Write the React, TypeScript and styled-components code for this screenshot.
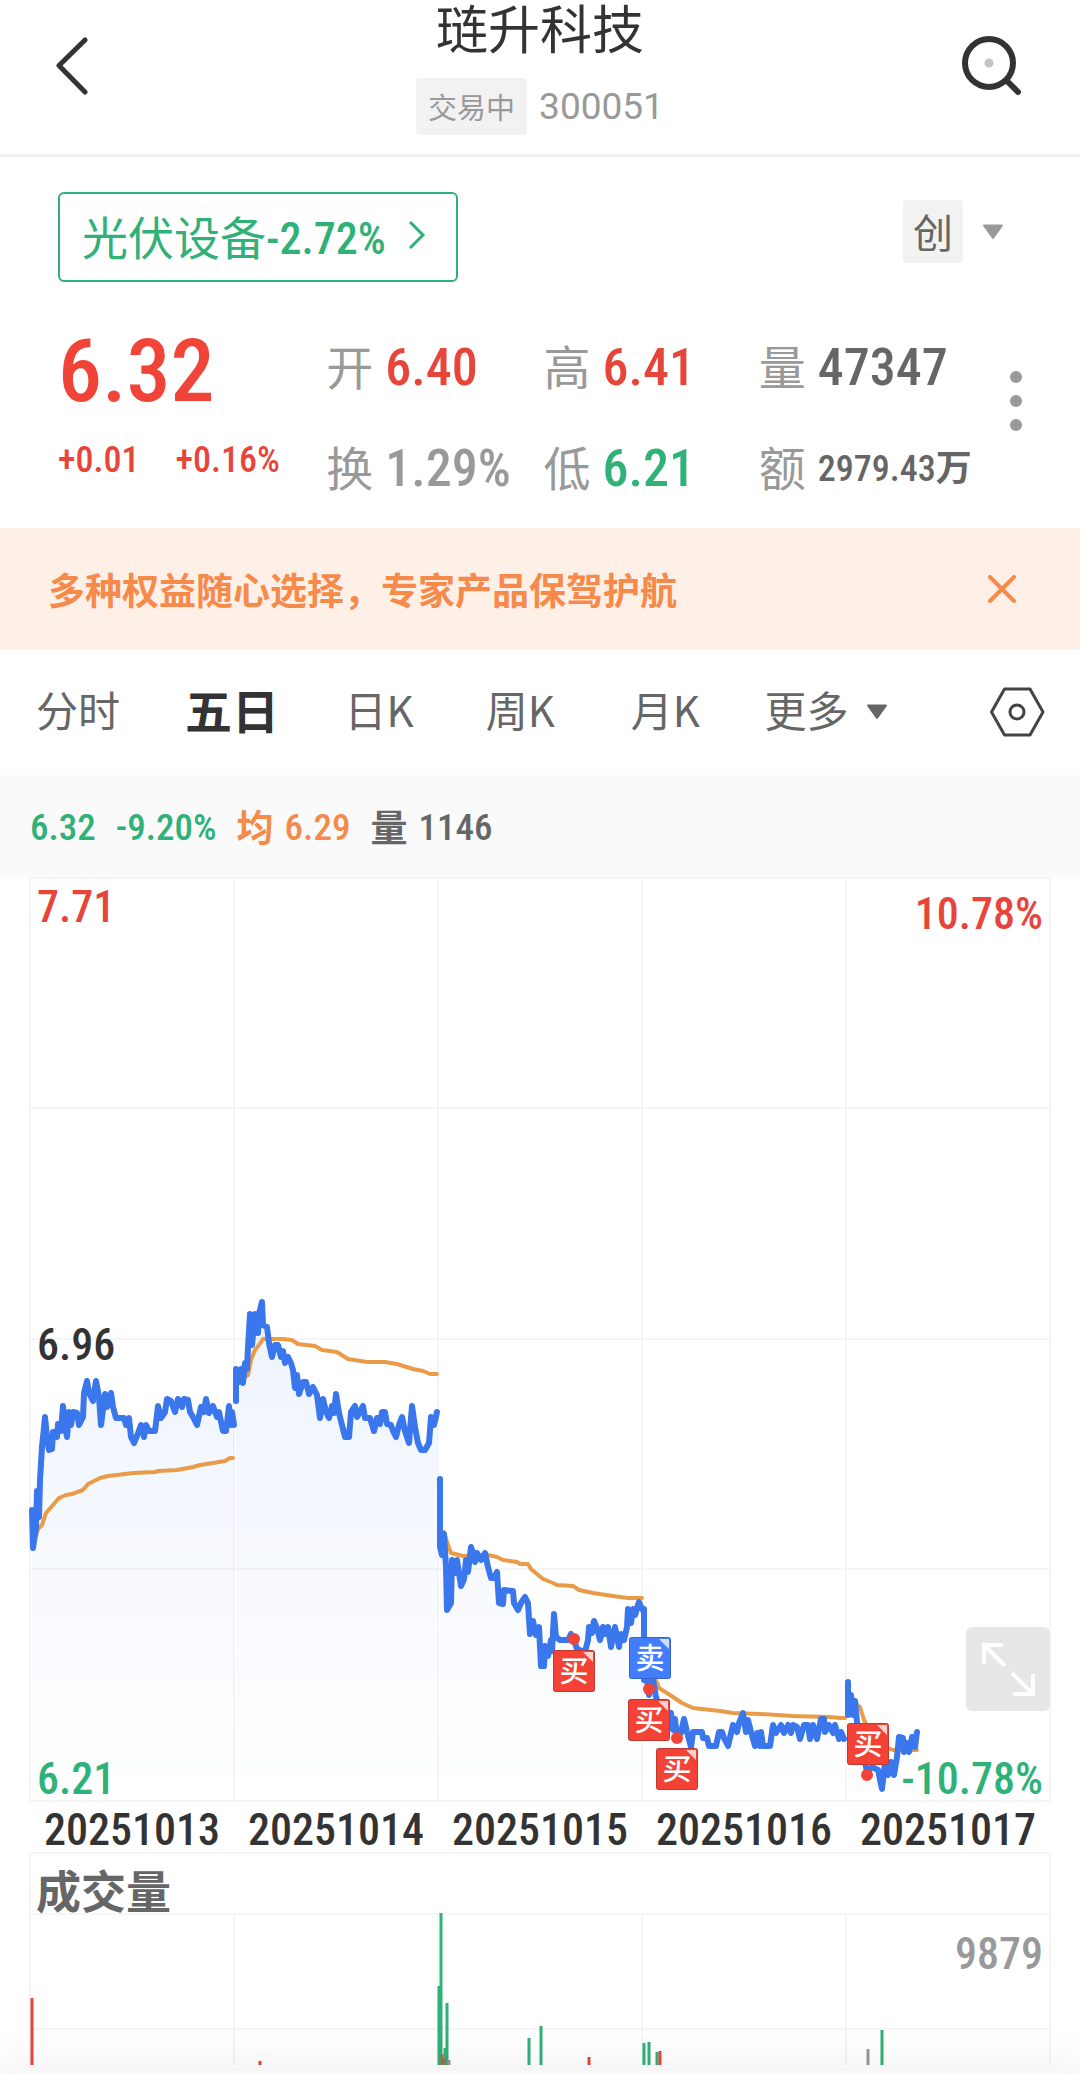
import React from 'react';
import styled, { createGlobalStyle } from 'styled-components';

const red = '#e8453a';
const green = '#2fb178';
const orange = '#f58a4b';
const ink = '#333333';
const mid = '#666666';
const soft = '#999999';
const line = '#f5f5f5';

const cjk = "'Noto Sans CJK SC', sans-serif";
const digits = `'Roboto Condensed', Roboto, ${cjk}`;

const GlobalStyle = createGlobalStyle`
  * { box-sizing: border-box; }
  body { margin: 0; background: #fff; color: ${ink}; font-family: Roboto, ${cjk}; overflow-x: hidden; }
  h1, p { margin: 0; font-weight: 400; }
  button { border: 0; padding: 0; background: none; color: inherit; font: inherit; cursor: pointer; }
  svg { display: block; }
`;

const Page = styled.main`
  overflow: hidden;
`;

const Header = styled.header`
  display: grid;
  grid-template-columns: 1fr auto 1fr;
  align-items: start;
  padding: 0 56px 19px;
  border-bottom: 3px solid #f2f2f2;
`;

const HeaderButton = styled.button<{ $end?: boolean }>`
  justify-self: ${(p) => (p.$end ? 'end' : 'start')};
  margin-top: 32px;
`;

const TitleBlock = styled.div`
  display: flex;
  flex-direction: column;
  align-items: center;
  gap: 24px;
`;

const Title = styled.h1`
  font: 400 52px/54px ${cjk};
`;

const CodeRow = styled.div`
  display: flex;
  align-items: center;
  gap: 12px;
  color: ${soft};
  font-size: 37px;
`;

const StatusBadge = styled.span`
  padding: 0 12px;
  border-radius: 4px;
  background: #f2f2f2;
  font: 400 29px/57px ${cjk};
`;

const Quote = styled.section`
  padding: 35px 58px 29px;
`;

const SectorRow = styled.div`
  display: flex;
  justify-content: space-between;
  align-items: flex-start;
`;

const SectorButton = styled.button`
  display: flex;
  align-items: center;
  height: 90px;
  padding: 0 30px 4px 22px;
  border: 2px solid ${green};
  border-radius: 6px;
  color: ${green};
  font: 400 46px/46px ${cjk};
`;

const SectorChange = styled.span`
  margin-right: 22px;
  font: 500 44px/46px ${digits};
  padding-top: 8px;
`;

const BoardButton = styled.button`
  display: flex;
  align-items: center;
  gap: 19px;
  margin: 8px 18px 0 0;
`;

const BoardBadge = styled.span`
  padding: 0 10px;
  border-radius: 4px;
  background: #f2f2f2;
  color: ${mid};
  font: 400 40px/63px ${cjk};
`;

const Stats = styled.div`
  display: grid;
  grid-template-columns: minmax(0, 268fr) minmax(0, 217fr) minmax(0, 215fr) minmax(0, 251fr) auto;
  margin-top: 43px;
`;

const PriceColumn = styled.div`
  display: flex;
  flex-direction: column;
  gap: 23px;
  color: ${red};
`;

const Price = styled.strong`
  color: #f04438;
  font: 500 88px/92px ${digits};
`;

const Changes = styled.p`
  display: flex;
  gap: 36px;
  font: 500 36px/40px ${digits};
`;

const StatColumn = styled.div`
  display: flex;
  flex-direction: column;
  gap: 41px;
  padding-top: 13px;
`;

const Stat = styled.p`
  display: flex;
  align-items: center;
  gap: 12px;
  height: 60px;
  white-space: nowrap;
`;

const StatLabel = styled.span`
  padding-bottom: 6px;
  color: ${soft};
  font: 400 47px/54px ${cjk};
`;

const StatValue = styled.span<{ $color: string; $small?: boolean }>`
  color: ${(p) => p.$color};
  font: 500 ${(p) => (p.$small ? 36 : 52)}px/60px ${digits};
`;

const Unit = styled.span`
  font: 700 36px/36px ${cjk};
`;

const MoreButton = styled.button`
  align-self: start;
  margin-top: 46px;
`;

const Banner = styled.aside`
  display: flex;
  align-items: center;
  justify-content: space-between;
  height: 121px;
  padding: 0 64px 0 48px;
  background: #fff0e7;
  color: ${orange};
  font: 700 37px/46px ${cjk};
`;

const Tabs = styled.nav`
  display: grid;
  grid-template-columns: 158fr 154fr 144fr 142fr 152fr 136fr 194fr;
  align-items: center;
  height: 126px;
`;

const Tab = styled.button<{ $active?: boolean }>`
  display: flex;
  align-items: center;
  justify-content: center;
  padding-bottom: 6px;
  color: ${(p) => (p.$active ? ink : mid)};
  font: ${(p) => (p.$active ? '700 47px' : '400 42px')}/54px ${cjk};
  white-space: nowrap;
`;

const MoreTab = styled(Tab)`
  justify-content: flex-start;
  gap: 18px;
  padding-left: 24px;
  & > svg { margin-top: 6px; }
`;

const SettingsButton = styled.button`
  justify-self: end;
  margin-right: 35px;
`;

const InfoBar = styled.div`
  display: flex;
  align-items: center;
  gap: 20px;
  height: 102px;
  padding: 4px 30px 0;
  background: #fafafa;
`;

const Info = styled.span<{ $color: string }>`
  display: flex;
  align-items: center;
  gap: 11px;
  color: ${(p) => p.$color};
  font: 500 37px/46px ${digits};
`;

const InfoLabel = styled.span`
  padding-bottom: 4px;
  font: 700 37px/46px ${cjk};
`;

const Panel = styled.section`
  position: relative;
  margin: 1px 30px 0;
  & > svg { width: 100%; height: auto; overflow: visible; }
`;

const AxisLabel = styled.span<{ $color: string; $right?: boolean; $top?: string }>`
  position: absolute;
  ${(p) => (p.$right ? 'right' : 'left')}: 7px;
  ${(p) => (p.$top ? `top: ${p.$top}` : 'bottom: 0')};
  color: ${(p) => p.$color};
  font: 500 44px/44px ${digits};
`;

const VolumeTitle = styled.h2`
  position: absolute;
  top: 14px;
  left: 6px;
  margin: 0;
  color: ${mid};
  font: 700 45px/46px ${cjk};
`;

const ExpandButton = styled.button`
  position: absolute;
  right: 0;
  bottom: 90px;
  border-radius: 6px;
  background: #e7e7e7;
`;

const Dates = styled.div`
  display: grid;
  grid-template-columns: repeat(5, 1fr);
  margin: 0 30px;
  text-align: center;
  font: 500 44px/44px ${digits};
  padding: 7px 0 0;
`;

const Sheet = styled.footer`
  position: relative;
  height: 4px;
  margin: 6px 20px 0;
  border-radius: 24px 24px 0 0;
  background: #fafafa;
  box-shadow: 0 30px 56px 30px rgba(0, 0, 0, 0.08);
`;

const MarkerText = styled.text`
  fill: #fff;
  font: 500 29px ${cjk};
  text-anchor: middle;
`;

const priceDays = [
  '32,1510 33,1548 36,1527 37,1491 39,1517 40,1480 42,1447 45,1417 47,1437 49,1450 52,1449 53,1432 57,1437 58,1424 61,1431 63,1406 65,1427 67,1437 69,1412 71,1425 73,1412 77,1413 79,1425 83,1417 84,1393 87,1381 89,1393 93,1401 96,1381 99,1397 101,1425 105,1394 107,1407 111,1393 113,1407 116,1418 124,1418 126,1425 129,1418 131,1437 134,1443 137,1436 141,1425 144,1437 146,1425 149,1431 155,1431 158,1406 161,1418 165,1412 167,1399 171,1401 175,1412 178,1399 182,1407 184,1399 188,1400 190,1412 193,1417 197,1425 201,1407 204,1412 206,1399 209,1413 213,1406 217,1417 219,1412 223,1431 226,1431 229,1406 231,1425 232,1412 234,1425',
  '236,1401 236,1369 239,1382 241,1369 243,1383 245,1363 247,1369 248,1347 250,1314 252,1345 255,1314 258,1333 259,1314 262,1302 263,1325 267,1327 269,1343 272,1357 275,1345 278,1345 281,1357 283,1351 285,1363 288,1357 291,1363 293,1370 295,1388 297,1375 299,1394 303,1382 306,1382 309,1394 313,1387 317,1395 320,1418 323,1399 326,1412 329,1418 332,1406 334,1413 336,1394 339,1413 342,1425 345,1437 349,1437 351,1412 355,1406 357,1417 363,1406 365,1418 370,1418 374,1431 377,1418 380,1424 382,1412 385,1412 387,1424 391,1425 393,1431 396,1437 399,1425 402,1417 405,1431 409,1443 412,1406 415,1427 418,1443 421,1450 425,1450 429,1443 431,1417 434,1425 437,1412',
  '440,1479 440,1547 442,1555 444,1534 446,1567 447,1610 451,1603 452,1560 455,1573 457,1560 461,1586 464,1579 466,1560 468,1572 471,1547 473,1553 475,1562 477,1553 481,1560 485,1553 488,1567 491,1578 494,1578 497,1572 499,1603 503,1604 504,1590 513,1591 514,1603 518,1610 521,1603 525,1597 528,1603 530,1634 533,1621 536,1635 539,1627 541,1666 544,1666 545,1646 548,1656 551,1640 552,1651 554,1614 556,1637 560,1640 568,1640 571,1634 574,1640 577,1649 585,1652 588,1640 589,1627 592,1633 594,1621 597,1628 600,1640 603,1627 605,1634 608,1627 611,1647 615,1627 619,1647 621,1634 624,1640 627,1627 628,1609 631,1623 633,1609 635,1615 639,1602 642,1609',
  '644,1609 644,1680 647,1680 649,1695 651,1682 653,1680 656,1697 660,1710 667,1717 671,1713 673,1730 675,1719 677,1737 681,1733 684,1719 687,1732 691,1747 693,1732 702,1732 703,1738 707,1738 709,1746 716,1746 719,1732 722,1732 724,1738 728,1746 733,1725 737,1732 739,1723 743,1713 746,1732 748,1720 751,1732 755,1746 757,1733 760,1746 761,1732 763,1746 770,1746 773,1725 776,1733 781,1725 784,1733 788,1725 791,1733 793,1725 797,1727 800,1739 804,1725 808,1725 810,1739 813,1725 817,1739 821,1719 824,1719 825,1732 829,1725 833,1733 835,1725 839,1739 841,1732 844,1739',
  '848,1682 848,1715 851,1695 853,1715 855,1701 857,1722 862,1747 867,1772 872,1767 878,1770 882,1789 885,1762 888,1775 891,1762 894,1775 897,1757 899,1737 903,1738 904,1752 907,1743 909,1752 912,1737 915,1747 917,1732',
];

const averageDays = [
  '36,1536 38,1529 42,1525 46,1513 53,1505 59,1498 66,1495 72,1494 83,1490 88,1484 100,1478 108,1476 125,1474 133,1473 155,1472 158,1471 177,1470 193,1467 200,1465 213,1463 225,1461 230,1458 233,1458',
  '245,1377 248,1375 251,1360 255,1350 259,1345 263,1339 283,1339 292,1340 298,1344 315,1346 322,1350 337,1352 348,1359 367,1362 385,1362 397,1364 413,1369 423,1371 430,1374 437,1374',
  '444,1532 448,1545 451,1553 463,1556 488,1555 497,1557 503,1560 517,1562 520,1564 528,1564 531,1569 543,1579 553,1583 557,1585 573,1586 579,1590 593,1593 613,1596 628,1598 642,1598',
  '653,1670 656,1680 659,1688 670,1695 682,1703 693,1708 720,1711 733,1713 760,1714 793,1716 830,1717 840,1718 845,1718',
  '855,1703 860,1707 864,1720 874,1738 888,1748 893,1750 917,1750',
];

const trades = [
  { x: 553, y: 1650, sign: '买', dot: [574, 1639] },
  { x: 656, y: 1748, sign: '买', dot: [677, 1738] },
  { x: 628, y: 1699, sign: '买', dot: [649, 1689] },
  { x: 629, y: 1637, sign: '卖' },
  { x: 847, y: 1723, sign: '买', dot: [867, 1775] },
];

const volumes: [number, number, string][] = [
  [32, 1997, red], [260, 2060, red], [439, 1985, green], [441, 1912, green], [447, 2002, green],
  [445, 2047, green], [442, 2053, '#a0704f'], [444, 2057, '#a0704f'], [449, 2059, soft], [529, 2037, green],
  [541, 2025, green], [589, 2056, red], [644, 2042, green], [649, 2041, green], [657, 2051, green],
  [660, 2050, red], [868, 2048, soft], [882, 2029, green],
];

const days = ['20251013', '20251014', '20251015', '20251016', '20251017'];
const columns = [30, 234, 438, 642, 846, 1050];

const areaOf = (points: string) => {
  const list = points.split(' ');
  const first = list[0].split(',')[0];
  const last = list[list.length - 1].split(',')[0];
  return `${first},1801 ${points} ${last},1801`;
};

function Triangle({ color }: { color: string }) {
  return (
    <svg width="22" height="16" viewBox="0 0 22 16" aria-hidden="true">
      <path d="M2 1.5H20L11 14Z" fill={color} stroke={color} strokeWidth="2" strokeLinejoin="round" />
    </svg>
  );
}

function PriceChart() {
  return (
    <svg viewBox="30 878 1020 923" role="img" aria-label="五日">
      <defs>
        <linearGradient id="area" gradientUnits="userSpaceOnUse" x1="0" y1="1300" x2="0" y2="1801">
          <stop offset="0" stopColor="#3c78f0" stopOpacity="0.09" />
          <stop offset="1" stopColor="#3c78f0" stopOpacity="0" />
        </linearGradient>
      </defs>
      <g stroke={line} strokeWidth="2">
        {columns.map((x) => <line key={x} x1={x} x2={x} y1="878" y2="1801" />)}
        {[878, 1108, 1339, 1569, 1801].map((y) => <line key={y} x1="30" x2="1050" y1={y} y2={y} />)}
      </g>
      {priceDays.map((d) => <polygon key={d} points={areaOf(d)} fill="url(#area)" />)}
      <g fill="none" strokeLinecap="round" strokeLinejoin="round">
        {averageDays.map((d) => <polyline key={d} points={d} stroke="#e99b48" strokeWidth="4" />)}
        {priceDays.map((d) => <polyline key={d} points={d} stroke="#3a76ec" strokeWidth="6" />)}
      </g>
      {trades.map(({ x, y, sign, dot }) => (
        <g key={`${x}-${y}`}>
          {dot && <circle cx={dot[0]} cy={dot[1]} r="6" fill="#f04438" />}
          <rect
            x={x + 0.5} y={y + 0.5} width="41" height="41" rx="2"
            fill={sign === '卖' ? '#437dff' : '#f44336'} stroke={sign === '卖' ? '#3565c8' : '#c0392f'}
          />
          <path d={`M${x + 30} ${y + 2}H${x + 40}V${y + 12}Z`} fill="#fff" fillOpacity="0.75" />
          <MarkerText x={x + 21} y={y + 32}>{sign}</MarkerText>
        </g>
      ))}
    </svg>
  );
}

function VolumeChart() {
  return (
    <svg viewBox="30 1852 1020 212" role="img" aria-label="成交量">
      <g stroke={line} strokeWidth="2">
        {columns.map((x) => (
          <line key={x} x1={x} x2={x} y1={x === 30 || x === 1050 ? 1852 : 1912} y2="2064" />
        ))}
        {[1852, 1913, 2028].map((y) => <line key={y} x1="30" x2="1050" y1={y} y2={y} />)}
      </g>
      {volumes.map(([x, y, color]) => (
        <line key={`${x}-${y}`} x1={x} x2={x} y1={y} y2="2064" stroke={color} strokeWidth="3" />
      ))}
    </svg>
  );
}

export default function App() {
  return (
    <Page>
      <GlobalStyle />
      <Header>
        <HeaderButton type="button" aria-label="返回">
          <svg width="34" height="66" viewBox="0 0 34 66" fill="none" stroke={ink} strokeWidth="5" strokeLinecap="round" strokeLinejoin="round">
            <path d="M29 8L3 33.500L29 60" />
          </svg>
        </HeaderButton>
        <TitleBlock>
          <Title>琏升科技</Title>
          <CodeRow>
            <StatusBadge>交易中</StatusBadge>
            <span>300051</span>
          </CodeRow>
        </TitleBlock>
        <HeaderButton type="button" aria-label="搜索" $end>
          <svg width="64" height="66" viewBox="0 0 64 66" fill="none" stroke={ink} strokeLinecap="round">
            <circle cx="29" cy="31" r="24" strokeWidth="6" />
            <path d="M47 49L58 60" strokeWidth="6" />
            <circle cx="29" cy="31" r="4.500" fill="#c4c4c4" stroke="none" />
          </svg>
        </HeaderButton>
      </Header>

      <Quote>
        <SectorRow>
          <SectorButton type="button">
            光伏设备
            <SectorChange>-2.72%</SectorChange>
            <svg width="18" height="30" viewBox="0 0 18 30" fill="none" stroke={green} strokeWidth="3">
              <path d="M2 2L15 15L2 28" />
            </svg>
          </SectorButton>
          <BoardButton type="button" aria-haspopup="menu">
            <BoardBadge>创</BoardBadge>
            <Triangle color={soft} />
          </BoardButton>
        </SectorRow>
        <Stats>
          <PriceColumn>
            <Price>6.32</Price>
            <Changes><span>+0.01</span><span>+0.16%</span></Changes>
          </PriceColumn>
          <StatColumn>
            <Stat><StatLabel>开</StatLabel><StatValue $color={red}>6.40</StatValue></Stat>
            <Stat><StatLabel>换</StatLabel><StatValue $color={soft}>1.29%</StatValue></Stat>
          </StatColumn>
          <StatColumn>
            <Stat><StatLabel>高</StatLabel><StatValue $color={red}>6.41</StatValue></Stat>
            <Stat><StatLabel>低</StatLabel><StatValue $color={green}>6.21</StatValue></Stat>
          </StatColumn>
          <StatColumn>
            <Stat><StatLabel>量</StatLabel><StatValue $color={mid}>47347</StatValue></Stat>
            <Stat><StatLabel>额</StatLabel><StatValue $color={mid} $small>2979.43<Unit>万</Unit></StatValue></Stat>
          </StatColumn>
          <MoreButton type="button" aria-label="更多行情">
            <svg width="12" height="60" viewBox="0 0 12 60" fill={soft}>
              <circle cx="6" cy="6" r="6" /><circle cx="6" cy="30" r="6" /><circle cx="6" cy="54" r="6" />
            </svg>
          </MoreButton>
        </Stats>
      </Quote>

      <Banner>
        <span>多种权益随心选择，专家产品保驾护航</span>
        <button type="button" aria-label="关闭">
          <svg width="28" height="28" viewBox="0 0 28 28" stroke={orange} strokeWidth="4" strokeLinecap="round">
            <path d="M2 2L26 26M26 2L2 26" />
          </svg>
        </button>
      </Banner>

      <Tabs>
        <Tab type="button">分时</Tab>
        <Tab type="button" $active>五日</Tab>
        <Tab type="button">日K</Tab>
        <Tab type="button">周K</Tab>
        <Tab type="button">月K</Tab>
        <MoreTab type="button" aria-haspopup="menu">更多<Triangle color={mid} /></MoreTab>
        <SettingsButton type="button" aria-label="设置">
          <svg width="56" height="50" viewBox="0 0 56 50" fill="none" stroke="#444" strokeWidth="3" strokeLinejoin="round">
            <path d="M15.500 2H41L54 25L41 48H15.500L2.500 25Z" />
            <circle cx="28" cy="25" r="7" />
          </svg>
        </SettingsButton>
      </Tabs>

      <InfoBar>
        <Info $color={green}>6.32</Info>
        <Info $color={green}>-9.20%</Info>
        <Info $color={orange}><InfoLabel>均</InfoLabel>6.29</Info>
        <Info $color={mid}><InfoLabel>量</InfoLabel>1146</Info>
      </InfoBar>

      <Panel>
        <PriceChart />
        <AxisLabel $color={red} $top="7px">7.71</AxisLabel>
        <AxisLabel $color={red} $right $top="14px">10.78%</AxisLabel>
        <AxisLabel $color={ink} $top="calc(50% - 17px)">6.96</AxisLabel>
        <AxisLabel $color={green}>6.21</AxisLabel>
        <AxisLabel $color={green} $right>-10.78%</AxisLabel>
        <ExpandButton type="button" aria-label="全屏">
          <svg width="84" height="84" viewBox="0 0 84 84" fill="none" stroke="#fff" strokeWidth="4">
            <path d="M18 37V18H37M18 18L39 39M46 46L67 67M67 47V67H47" />
          </svg>
        </ExpandButton>
      </Panel>

      <Dates>
        {days.map((d) => <span key={d}>{d}</span>)}
      </Dates>

      <Panel>
        <VolumeChart />
        <VolumeTitle>成交量</VolumeTitle>
        <AxisLabel $color={soft} $right $top="79px">9879</AxisLabel>
      </Panel>
      <Sheet />
    </Page>
  );
}
